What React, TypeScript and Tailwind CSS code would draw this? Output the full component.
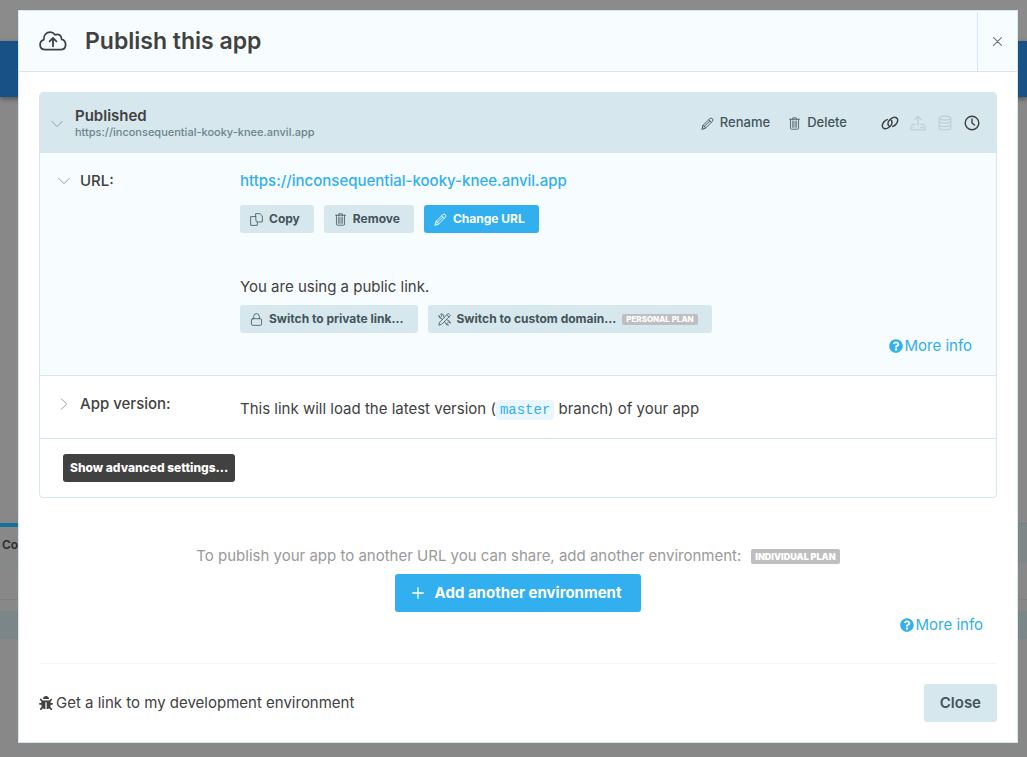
import type { ReactNode, SVGProps } from "react";
import { FaBug, FaQuestionCircle } from "react-icons/fa";

function Icon({ children, ...rest }: SVGProps<SVGSVGElement>) {
  return (
    <svg viewBox="0 0 16 16" fill="none" stroke="currentColor" strokeLinecap="round" strokeLinejoin="round" aria-hidden="true" {...rest}>
      {children}
    </svg>
  );
}

function CloudUpload() {
  return (
    <svg viewBox="0 0 28 20" className="h-5 w-7 shrink-0" fill="none" stroke="currentColor" strokeWidth="1.8" strokeLinecap="round" strokeLinejoin="round" aria-hidden="true">
      <path d="M6.6 18.7C3.2 18.7 1.1 16.6 1.1 13.7C1.1 11.2 2.4 9.4 4.8 8.6C4.4 4.2 7.4 1.2 11.2 1.2C13.2 1.2 14.8 2.1 16 3.8C19.6 2.3 22.6 4.5 22.7 8.4C25.3 9.1 26.6 11.1 26.6 13.7C26.6 16.7 24.5 18.7 21.4 18.7Z" />
      <path d="M14 15.3V7.2M10.6 10.4L14 7L17.4 10.4" />
    </svg>
  );
}

function Pencil() {
  return (
    <Icon className="size-[13px] shrink-0" strokeWidth="1.1">
      <path d="M1.2 14.8L2.4 10.4L10.6 2.2Q12.4.4 14 2Q15.6 3.6 13.8 5.4L5.6 13.6Z" />
      <path d="M2.4 10.4Q5.2 10.6 5.6 13.6M9.4 3.4L12.6 6.6M4.4 11.2L11 4.8M1.8 12.6L3.4 14.2" />
    </Icon>
  );
}

function Trash() {
  return (
    <Icon className="size-[13px] shrink-0" strokeWidth="1">
      <path d="M2 2.8H14M5.8 2.8V1H10.2V2.8M3 2.8V13.8Q3 15 4.2 15H11.8Q13 15 13 13.8V2.8" />
      <path d="M5.4 5V12.8M7.1 5V12.8M8.9 5V12.8M10.6 5V12.8" strokeWidth="0.8" />
    </Icon>
  );
}

function CopyIcon() {
  return (
    <Icon className="size-[13px] shrink-0" strokeWidth="1">
      <path d="M7.3.8H12.3L15.2 3.6V11H9.2Q7.3 11 7.3 9.2Z" />
      <path d="M7.3 4.4H.8V15.2H9V11" />
    </Icon>
  );
}

function Lock() {
  return (
    <Icon className="size-[13px] shrink-0" strokeWidth="1">
      <rect x="1.8" y="7" width="12.4" height="8.2" rx="1.5" />
      <path d="M4.5 7V4.3A3.5 3.5 0 0 1 11.5 4.3V7" />
    </Icon>
  );
}

function Tools() {
  return (
    <Icon className="size-[13px] shrink-0" strokeWidth="1">
      <path d="M12.8.8L15.2 3.2L4.4 14L1 15L2 11.6ZM11 2.6L13.4 5" />
      <path d="M1 3.4L3 5.2L5 3.4L3.4 1.2Q6.4.6 7 3.2V4.6L7.8 5.6M1 3.4Q1 6.6 4.4 7L5.6 7.8M10.6 8.2L12 9Q15 9.4 15.2 12.6L13.2 10.8L11.2 12.8L12.8 15Q9.4 15 9 12L8.2 10.6" />
    </Icon>
  );
}

function Chevron({ open = false }: { open?: boolean }) {
  return (
    <Icon className="size-3 shrink-0 text-[#929b9e]" strokeWidth="1.3">
      {open ? <path d="M1 4.5L8 11.5L15 4.5" /> : <path d="M4.5 1L11.5 8L4.5 15" />}
    </Icon>
  );
}

function SmallButton({ icon, children, primary = false }: { icon: ReactNode; children: ReactNode; primary?: boolean }) {
  return (
    <button
      type="button"
      className={
        primary
          ? "flex h-7 items-center gap-1.5 rounded-[3px] bg-[#31afef] pr-3.5 pl-2.5 text-xs font-bold text-white"
          : "flex h-7 items-center gap-1.5 rounded-[3px] bg-[#d6e8ed] pr-3.5 pl-2.5 text-xs font-bold text-[#43545a]"
      }
    >
      {icon}
      {children}
    </button>
  );
}

function MoreInfo() {
  return (
    <a href="#more-info" className="inline-flex items-center gap-px text-[15px] leading-[22px] text-[#31afef]">
      <FaQuestionCircle className="size-[14px]" aria-hidden="true" />
      More info
    </a>
  );
}

function Backdrop() {
  return (
    <div className="absolute inset-0 flex flex-col overflow-hidden bg-[#888888]" aria-hidden="true">
      <div className="h-[41px] shrink-0 bg-[#8b8b8b]" />
      <div className="z-10 h-14 shrink-0 bg-[#185186] shadow-[0_2px_5px_rgba(0,0,0,0.4)]" />
      <div className="h-[426px] shrink-0" />
      <div className="flex h-10 shrink-0 items-center border-b border-[#7b8a8e] bg-[#7f8688] text-xs font-semibold text-[#2c2c2c]">
        <div className="flex h-full w-24 items-center border-t-4 border-[#176f9c] bg-[#888888] pl-0.5">Code</div>
        <div className="h-full flex-1 border-t border-[#748286]" />
      </div>
      <div className="h-[37px] shrink-0 border-b border-[#808080]" />
      <div className="mt-[11px] h-7 shrink-0 bg-[#7b8688]" />
    </div>
  );
}

export default function App() {
  return (
    <div className="relative min-h-screen font-['Inter',sans-serif] text-[#414141]">
      <Backdrop />
      <div className="relative z-20 pt-2.5 pr-[9px] pb-3.5 pl-[18px]">
        <section role="dialog" aria-labelledby="dialog-title" className="border border-[#d6e8ed] bg-white">
          <header className="flex h-[61px] items-stretch border-b border-[#d6e8ed] bg-[#f7fcff]">
            <div className="flex flex-1 items-center gap-[18px] pl-5">
              <CloudUpload />
              <h1 id="dialog-title" className="text-[23px] font-semibold">Publish this app</h1>
            </div>
            <button type="button" aria-label="Close dialog" className="mt-px flex w-10 items-center justify-center border-l border-[#d6e8ed] text-[#61747b]">
              <Icon className="size-[9px]" strokeWidth="1.8"><path d="M1 1L15 15M15 1L1 15" /></Icon>
            </button>
          </header>

          <main className="px-5 pt-5">
            <div className="overflow-hidden rounded border border-[#d6e8ed]">
              <div className="flex h-[60px] items-center bg-[#d6e8ed] pr-4 pl-[11px]">
                <button type="button" aria-label="Collapse environment" className="flex w-6 pt-0.5"><Chevron open /></button>
                <div className="flex-1 pt-0.5">
                  <h2 className="text-[15px] leading-4 font-semibold">Published</h2>
                  <p className="text-[11px] leading-4 font-medium text-[#6b848c]">https://inconsequential-kooky-knee.anvil.app</p>
                </div>
                <div className="flex items-center text-[13px] font-medium text-[#43545a]">
                  <button type="button" className="mr-[18px] flex items-center gap-1.5"><Pencil />Rename</button>
                  <button type="button" className="mr-[34px] flex items-center gap-1.5"><Trash />Delete</button>
                  <div className="flex items-center gap-[11px] text-[#414141]">
                    <Icon viewBox="0 0 18 16" className="h-4 w-[18px]" strokeWidth="1.5">
                      <path d="M8.2 11.2C6.6 10.2 6.5 7.6 8.2 5.4C10.2 2.8 13.6 1.5 15.6 2.9C17.5 4.3 16.9 7.4 14.6 9.6C13.7 10.5 12.7 11.1 11.7 11.4" />
                      <path d="M9.8 4.8C11.4 5.8 11.5 8.4 9.8 10.6C7.8 13.2 4.4 14.5 2.4 13.1C.5 11.7 1.1 8.6 3.4 6.4C4.3 5.5 5.3 4.9 6.3 4.6" />
                    </Icon>
                    <Icon className="size-4 text-[#c0d1d6]" strokeWidth="1.3">
                      <path d="M8 10.5V1.5M4.8 4.5L8 1.3L11.2 4.5M5 9.5H2.5L.8 12V14.8H15.2V12L13.5 9.5H11M3 12.7H3.1M11 12.7H13" />
                    </Icon>
                    <Icon className="size-4 text-[#c0d1d6]" strokeWidth="1.3">
                      <ellipse cx="8" cy="3" rx="5.8" ry="2" />
                      <path d="M2.2 3V13C2.2 15.6 13.8 15.6 13.8 13V3M2.2 6.3C2.2 8.8 13.8 8.8 13.8 6.3M2.2 9.7C2.2 12.2 13.8 12.2 13.8 9.7" />
                    </Icon>
                    <Icon className="size-4" strokeWidth="1.4">
                      <circle cx="8" cy="8" r="6.8" /><path d="M8 4V8L10.5 10" />
                    </Icon>
                  </div>
                </div>
              </div>

              <div className="flex border-b border-[#d6e8ed] bg-[#f7fcff] pr-6 pb-[18px] pl-[18px]">
                <div className="flex w-[182px] shrink-0 items-center gap-2.5 self-start pt-[18px]">
                  <Chevron open />
                  <h3 className="text-[15px] leading-5 font-medium">URL:</h3>
                </div>
                <div className="flex-1 pt-[18px]">
                  <a href="https://inconsequential-kooky-knee.anvil.app" className="block text-[15px] leading-5 font-medium text-[#31afef]">https://inconsequential-kooky-knee.anvil.app</a>
                  <div className="mt-3.5 flex gap-2.5">
                    <SmallButton icon={<CopyIcon />}>Copy</SmallButton>
                    <SmallButton icon={<Trash />}>Remove</SmallButton>
                    <SmallButton primary icon={<Pencil />}>Change URL</SmallButton>
                  </div>
                  <p className="mt-11 text-[15px] leading-5">You are using a public link.</p>
                  <div className="mt-2 flex gap-2.5">
                    <SmallButton icon={<Lock />}>Switch to private link...</SmallButton>
                    <SmallButton icon={<Tools />}>
                      Switch to custom domain...
                      <span className="rounded-xs bg-[#bfbfbf] px-1 text-[8px] leading-[11px] font-extrabold text-white">PERSONAL PLAN</span>
                    </SmallButton>
                  </div>
                  <div className="mt-0.5 flex justify-end"><MoreInfo /></div>
                </div>
              </div>

              <div className="flex h-[63px] border-b border-[#d6e8ed] pl-[18px]">
                <div className="flex w-[182px] shrink-0 items-center gap-2.5 self-start pt-[18px]">
                  <Chevron />
                  <h3 className="text-[15px] leading-5 font-medium">App version:</h3>
                </div>
                <p className="pt-[23px] text-[15px] leading-5">
                  This link will load the latest version (<code className="rounded bg-[#e9f6fd] px-1 py-0.5 font-['Liberation_Mono',monospace] text-sm text-[#31afef]">master</code> branch) of your app
                </p>
              </div>

              <div className="flex h-[58px] items-center pl-[23px]">
                <button type="button" className="h-7 rounded-[3px] bg-[#414141] px-[7px] text-xs font-extrabold text-white">Show advanced settings...</button>
              </div>
            </div>

            <div className="mt-12 flex flex-col items-center">
              <div className="flex items-center gap-2.5">
                <p className="text-[15px] leading-5 text-[#999999]">To publish your app to another URL you can share, add another environment:</p>
                <span className="rounded-xs bg-[#bfbfbf] px-1 text-[9px] leading-[15px] font-black text-white">INDIVIDUAL PLAN</span>
              </div>
              <button type="button" className="mt-2 flex h-[38px] items-center gap-2.5 rounded-[3px] bg-[#31afef] pr-5 pl-4 text-[15px] font-bold text-white">
                <Icon className="size-[14px]" strokeWidth="1.5"><path d="M8 2V14M2 8H14" /></Icon>
                Add another environment
              </button>
            </div>
            <div className="mt-0.5 flex justify-end pr-3.5"><MoreInfo /></div>
            <footer className="mt-[27px] flex items-center justify-between border-t border-[#f5f5f5] py-5">
              <a href="#development" className="flex items-center gap-[3px] text-[15px]"><FaBug className="size-[14px]" aria-hidden="true" />Get a link to my development environment</a>
              <button type="button" className="h-[38px] rounded-[3px] bg-[#d6e8ed] px-4 text-[15px] font-semibold text-[#43545a]">Close</button>
            </footer>
          </main>
        </section>
      </div>
    </div>
  );
}
